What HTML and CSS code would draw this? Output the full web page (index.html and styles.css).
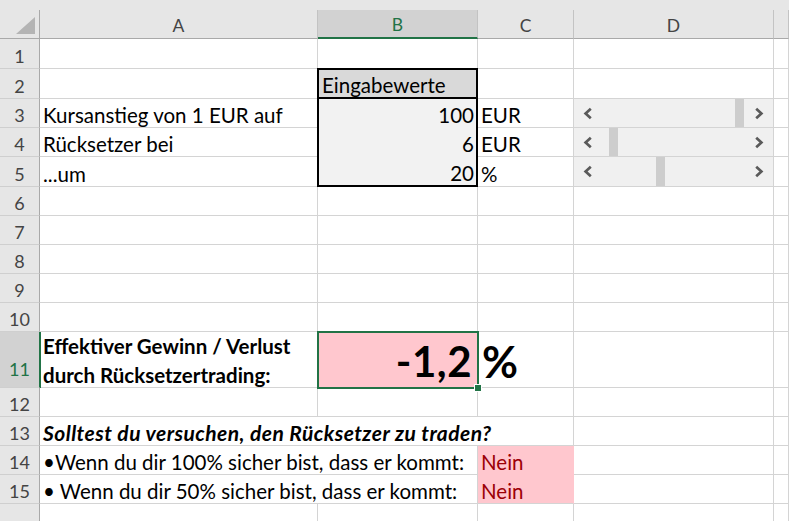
FILE: index.html
```html
<!DOCTYPE html>
<html lang="de">
<head>
<meta charset="utf-8">
<title>Rücksetzertrading</title>
<link rel="stylesheet" href="styles.css">
</head>
<body>
<div class="topband"></div>
<div class="sheet">
  <div class="corner"><svg width="19" height="17" viewBox="0 0 19 17"><polygon points="19,0 19,17 0,17" fill="#b4b4b4"/></svg></div>
  <div class="h">A</div><div class="h sel">B</div><div class="h">C</div><div class="h">D</div><div class="h"></div>

  <div class="rh">1</div><div class="c"></div><div class="c"></div><div class="c"></div><div class="c"></div><div class="c"></div>

  <div class="rh">2</div><div class="c"></div>
  <div class="range">
    <div class="rc rc-head">Eingabewerte</div>
    <div class="rc num">100</div>
    <div class="rc num">6</div>
    <div class="rc num rc-last">20</div>
  </div>
  <div class="c"></div><div class="c"></div><div class="c"></div>

  <div class="rh">3</div><div class="c">Kursanstieg von 1 EUR auf</div><div class="c">EUR</div>
  <div class="c sbcell"><div class="sb"><span class="arr"><svg width="10" height="13" viewBox="0 0 10 13"><polyline points="7.8,1.8 2.6,6.5 7.8,11.2" fill="none" stroke="#5a5a5a" stroke-width="2.7"/></svg></span><span class="track"><span class="thumb" style="margin-left:133px"></span></span><span class="arr"><svg width="10" height="13" viewBox="0 0 10 13"><polyline points="2.2,1.8 7.4,6.5 2.2,11.2" fill="none" stroke="#5a5a5a" stroke-width="2.7"/></svg></span></div></div>
  <div class="c"></div>

  <div class="rh">4</div><div class="c">Rücksetzer bei</div><div class="c">EUR</div>
  <div class="c sbcell"><div class="sb"><span class="arr"><svg width="10" height="13" viewBox="0 0 10 13"><polyline points="7.8,1.8 2.6,6.5 7.8,11.2" fill="none" stroke="#5a5a5a" stroke-width="2.7"/></svg></span><span class="track"><span class="thumb" style="margin-left:7px"></span></span><span class="arr"><svg width="10" height="13" viewBox="0 0 10 13"><polyline points="2.2,1.8 7.4,6.5 2.2,11.2" fill="none" stroke="#5a5a5a" stroke-width="2.7"/></svg></span></div></div>
  <div class="c"></div>

  <div class="rh">5</div><div class="c">...um</div><div class="c">%</div>
  <div class="c sbcell"><div class="sb"><span class="arr"><svg width="10" height="13" viewBox="0 0 10 13"><polyline points="7.8,1.8 2.6,6.5 7.8,11.2" fill="none" stroke="#5a5a5a" stroke-width="2.7"/></svg></span><span class="track"><span class="thumb" style="margin-left:54px"></span></span><span class="arr"><svg width="10" height="13" viewBox="0 0 10 13"><polyline points="2.2,1.8 7.4,6.5 2.2,11.2" fill="none" stroke="#5a5a5a" stroke-width="2.7"/></svg></span></div></div>
  <div class="c"></div>

  <div class="rh">6</div><div class="c"></div><div class="c"></div><div class="c"></div><div class="c"></div><div class="c"></div>
  <div class="rh">7</div><div class="c"></div><div class="c"></div><div class="c"></div><div class="c"></div><div class="c"></div>
  <div class="rh">8</div><div class="c"></div><div class="c"></div><div class="c"></div><div class="c"></div><div class="c"></div>
  <div class="rh">9</div><div class="c"></div><div class="c"></div><div class="c"></div><div class="c"></div><div class="c"></div>
  <div class="rh">10</div><div class="c"></div><div class="c"></div><div class="c"></div><div class="c"></div><div class="c"></div>

  <div class="rh rh-sel">11</div>
  <div class="c wrapcell"><div class="wraptext">Effektiver Gewinn / Verlust<br>durch Rücksetzertrading:</div></div>
  <div class="c result">-1,2<span class="handle"></span></div>
  <div class="c pct">%</div>
  <div class="c"></div><div class="c"></div>

  <div class="rh">12</div><div class="c"></div><div class="c"></div><div class="c"></div><div class="c"></div><div class="c"></div>

  <div class="rh">13</div><div class="c span3 question">Solltest du versuchen, den Rücksetzer zu traden?</div><div class="c"></div><div class="c"></div>

  <div class="rh">14</div><div class="c span2">•Wenn du dir 100% sicher bist, dass er kommt:</div><div class="c nein nein-top">Nein</div><div class="c"></div><div class="c"></div>

  <div class="rh">15</div><div class="c span2">• Wenn du dir 50% sicher bist, dass er kommt:</div><div class="c nein">Nein</div><div class="c"></div><div class="c"></div>

  <div class="rh">16</div><div class="c"></div><div class="c"></div><div class="c"></div><div class="c"></div><div class="c"></div>
</div>
</body>
</html>
```

FILE: styles.css
```css
html, body {
  margin: 0;
  padding: 0;
  overflow: hidden;
  background: #ffffff;
}

body {
  font-family: "Lato", "Open Sans", sans-serif;
  font-size: 20.5px;
  color: #000;
}

.topband {
  height: 10px;
  background: #e6e6e6;
}

.sheet {
  display: grid;
  grid-template-columns: 40px 278px 160px 96px 200px 1fr;
  grid-template-rows: 29px 30px 30px 29px 29px 30px 29px 29px 29px 29px 29px 56px 29px 29px 29px 29px 40px;
}

.sheet > div {
  box-sizing: border-box;
  min-width: 0;
}

/* column headers */
.corner {
  background: #e6e6e6;
  border-right: 1px solid #a9a9a9;
  border-bottom: 1px solid #a9a9a9;
  display: flex;
  justify-content: flex-end;
  align-items: flex-end;
  padding: 0 4px 4px 0;
}

.h {
  background: #e6e6e6;
  border-right: 1px solid #c3c3c3;
  border-bottom: 1px solid #a9a9a9;
  display: flex;
  justify-content: center;
  align-items: flex-end;
  font-size: 17.5px;
  line-height: 24px;
  color: #444;
}

.h.sel {
  background: #d2d2d2;
  color: #217346;
  border-bottom: 2px solid #217346;
}

/* row headers */
.rh {
  background: #e6e6e6;
  border-right: 1px solid #a9a9a9;
  border-bottom: 1px solid #cfcfcf;
  display: flex;
  justify-content: center;
  align-items: flex-end;
  font-size: 18px;
  line-height: 24px;
  color: #444;
}

.rh.rh-sel {
  background: #d2d2d2;
  color: #217346;
  border-right: 1px solid #217346;
  box-shadow: 1px 0 0 #217346;
  position: relative;
  z-index: 1;
  padding-bottom: 6px;
}

/* cells */
.c {
  border-right: 1px solid #d4d4d4;
  border-bottom: 1px solid #d4d4d4;
  display: flex;
  align-items: flex-end;
  padding: 0 3px;
  line-height: 24px;
  white-space: nowrap;
}

.span2 { grid-column: span 2; }
.span3 { grid-column: span 3; }

.question {
  font-weight: bold;
  font-style: italic;
  font-size: 21px;
  letter-spacing: 0.45px;
}

/* input range B2:B5 */
.range {
  grid-row: span 4;
  margin: -1px 0 0 -1px;
  border: 2px solid #000;
  background: #f2f2f2;
  display: flex;
  flex-direction: column;
  position: relative;
  z-index: 1;
}

.rc {
  box-sizing: border-box;
  height: 29px;
  display: flex;
  align-items: flex-end;
  padding: 0 2px 1px 3px;
  line-height: 24px;
  white-space: nowrap;
}

.rc-head {
  background: #d9d9d9;
  border-bottom: 2px solid #000;
  padding-bottom: 0;
}

.rc.num {
  justify-content: flex-end;
}

.rc.rc-last {
  height: auto;
  flex: 1;
  padding-bottom: 0;
}

/* scrollbars */
.c.sbcell {
  padding: 0;
  align-items: stretch;
}

.sb {
  flex: 1;
  display: flex;
  background: #f0f0f0;
}

.arr {
  width: 28px;
  flex: none;
  display: flex;
  align-items: center;
  justify-content: center;
}

.track {
  flex: 1;
  display: flex;
}

.thumb {
  width: 9px;
  background: #cdcdcd;
}

/* row 11 */
.c.wrapcell {
  font-weight: bold;
  white-space: normal;
}

.wraptext {
  line-height: 29px;
  margin-bottom: -3px;
}

.c.result {
  margin: -1px;
  border: 2px solid #217346;
  background: #ffc7ce;
  justify-content: flex-end;
  font-weight: bold;
  font-size: 42px;
  letter-spacing: 0.5px;
  line-height: 48px;
  padding: 0 5px 2px 0;
  position: relative;
  z-index: 1;
}

.handle {
  position: absolute;
  right: -4px;
  bottom: -4px;
  width: 6px;
  height: 6px;
  background: #217346;
  box-shadow: 0 0 0 1px #fff;
}

.c.pct {
  font-weight: bold;
  font-size: 44px;
  line-height: 48px;
  padding: 0 0 2px 4px;
}

/* result cells */
.c.nein {
  background: #ffc7ce;
  color: #9c0006;
  border-right-color: #ffc7ce;
}

.c.nein-top {
  border-bottom-color: #ffc7ce;
}
```
